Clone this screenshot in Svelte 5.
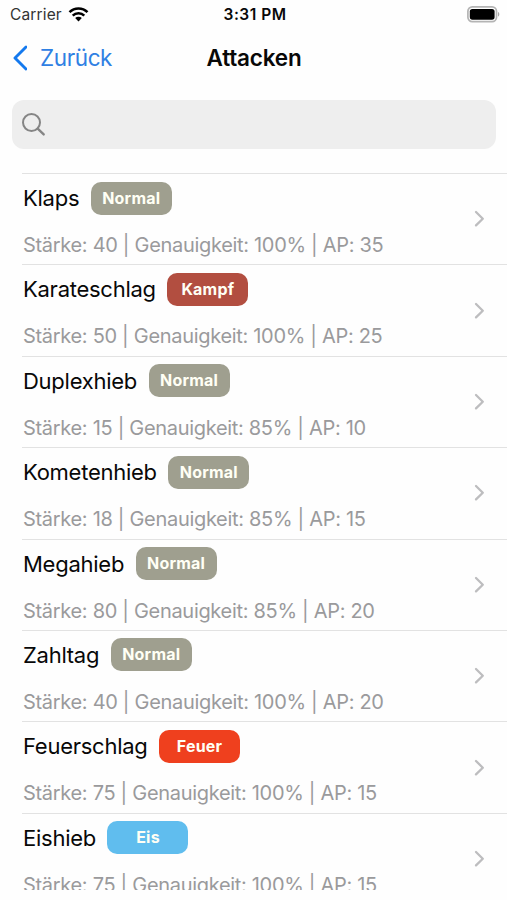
<script lang="ts">
	type Kind = 'Normal' | 'Kampf' | 'Feuer' | 'Eis';

	interface Move {
		name: string;
		kind: Kind;
		power: number;
		accuracy: number;
		pp: number;
	}

	const moves: Move[] = [
		{ name: 'Klaps', kind: 'Normal', power: 40, accuracy: 100, pp: 35 },
		{ name: 'Karateschlag', kind: 'Kampf', power: 50, accuracy: 100, pp: 25 },
		{ name: 'Duplexhieb', kind: 'Normal', power: 15, accuracy: 85, pp: 10 },
		{ name: 'Kometenhieb', kind: 'Normal', power: 18, accuracy: 85, pp: 15 },
		{ name: 'Megahieb', kind: 'Normal', power: 80, accuracy: 85, pp: 20 },
		{ name: 'Zahltag', kind: 'Normal', power: 40, accuracy: 100, pp: 20 },
		{ name: 'Feuerschlag', kind: 'Feuer', power: 75, accuracy: 100, pp: 15 },
		{ name: 'Eishieb', kind: 'Eis', power: 75, accuracy: 100, pp: 15 }
	];
</script>

<div class="screen">
	<div class="status">
		<div class="carrier">
			<span>Carrier</span>
			<svg width="21" height="15" viewBox="0 0 20 15" aria-hidden="true">
				<g fill="none" stroke="#000" stroke-width="2.5">
					<path d="M1 5.2a12.8 12.8 0 0 1 18 0" />
					<path d="M4.2 8.6a8.2 8.2 0 0 1 11.6 0" />
				</g>
				<path d="M6.7 11.1a4.7 4.7 0 0 1 6.6 0L10 14.5z" />
			</svg>
		</div>
		<span class="time">3:31 PM</span>
		<svg class="battery" width="33" height="17" viewBox="0 0 33 17" aria-hidden="true">
			<rect x="0.9" y="0.9" width="28.6" height="14.8" rx="4.4" fill="#fff" stroke="#b4b4b4" stroke-width="1.7" />
			<rect x="2.8" y="2.9" width="24.8" height="10.8" rx="2.6" />
			<path d="M31 6v4.6c1.8-.7 1.8-3.9 0-4.6z" fill="#a8a8a8" />
		</svg>
	</div>

	<nav class="nav">
		<button class="back">
			<svg width="16" height="26" viewBox="0 0 16 26" fill="none" stroke="#1479ee" stroke-width="2.9" stroke-linecap="round" stroke-linejoin="round" aria-hidden="true">
				<path d="M15 2 4 13l11 11" />
			</svg>
			<span>Zurück</span>
		</button>
		<h1>Attacken</h1>
	</nav>

	<div class="search">
		<svg width="24" height="24" viewBox="0 0 24 24" fill="none" stroke="#858585" stroke-width="2" stroke-linecap="round" aria-hidden="true">
			<circle cx="9.5" cy="9.5" r="8.5" />
			<path d="m15.7 15.7 6 5.7" stroke-width="2.4" />
		</svg>
	</div>

	<ul class="list">
		{#each moves as move}
			<li>
				<div class="info">
					<div class="head">
						<span class="name">{move.name}</span>
						<span class="badge {move.kind.toLowerCase()}">{move.kind}</span>
					</div>
					<p>Stärke: {move.power} | Genauigkeit: {move.accuracy}% | AP: {move.pp}</p>
				</div>
				<svg class="chevron" width="11" height="18" viewBox="0 0 11 18" fill="none" stroke="#bdbdbf" stroke-width="2.3" stroke-linecap="round" stroke-linejoin="round" aria-hidden="true">
					<path d="m2 2 6.800 6.700L2 15.400" />
				</svg>
			</li>
		{/each}
	</ul>
</div>

<style>
	:global(body) {
		margin: 0;
		background: #fff;
	}

	.screen {
		display: flex;
		flex-direction: column;
		box-sizing: border-box;
		width: 507px;
		height: 900px;
		padding-bottom: 10.5px;
		overflow: hidden;
		background: #fefefe;
		color: #080808;
		font-family: Inter, 'Liberation Sans', sans-serif;
	}

	.status {
		display: grid;
		grid-template-columns: 1fr auto 1fr;
		align-items: center;
		flex: none;
		height: 29px;
		padding: 0 7px 0 10px;
		font-size: 15.5px;
		line-height: 29px;
	}

	.carrier {
		display: flex;
		align-items: center;
		gap: 6px;
		color: #333;
		letter-spacing: 0.15px;
	}

	.time {
		font-weight: 600;
		letter-spacing: 0.5px;
	}

	.battery {
		justify-self: end;
	}

	.nav {
		display: grid;
		grid-template-columns: 1fr auto 1fr;
		align-items: center;
		flex: none;
		height: 57px;
		padding: 0 10px 0 11px;
	}

	.back {
		display: flex;
		align-items: center;
		gap: 13px;
		padding: 0;
		border: 0;
		background: none;
		color: #2f80e3;
		font: inherit;
		font-size: 22.5px;
		letter-spacing: -0.4px;
	}

	h1 {
		margin: 0;
		font-size: 22.5px;
		font-weight: 600;
		letter-spacing: -0.2px;
	}

	.search {
		display: flex;
		align-items: center;
		flex: none;
		height: 49px;
		margin: 14px 11px 24px 12px;
		padding-left: 10px;
		border-radius: 12px;
		background: #eee;
	}

	.list {
		flex: 1;
		min-height: 0;
		margin: 0 0 0 22px;
		padding: 0;
		overflow: hidden;
		list-style: none;
	}

	li {
		display: flex;
		justify-content: space-between;
		box-sizing: border-box;
		height: 91.4px;
		padding-right: 22px;
		border-top: 1.5px solid #e2e2e2;
	}

	.head {
		display: flex;
		align-items: center;
		gap: 11.5px;
		height: 33px;
		margin-top: 7.5px;
	}

	.name {
		padding-left: 1px;
		font-size: 22px;
		letter-spacing: -0.26px;
	}

	.badge {
		width: 81px;
		height: 33px;
		border-radius: 10px;
		color: #fffff5;
		font-size: 16px;
		font-weight: 700;
		letter-spacing: 0.2px;
		line-height: 33px;
		text-align: center;
	}

	.normal {
		background: #9f9f8f;
	}

	.kampf {
		background: #b24e40;
	}

	.feuer {
		background: #ef401e;
	}

	.eis {
		background: #60bdee;
	}

	p {
		margin: 17.5px 0 0 1px;
		color: #9a9a9c;
		font-size: 20px;
		letter-spacing: -0.31px;
		line-height: 26px;
		white-space: nowrap;
	}

	.chevron {
		align-self: center;
	}
</style>
